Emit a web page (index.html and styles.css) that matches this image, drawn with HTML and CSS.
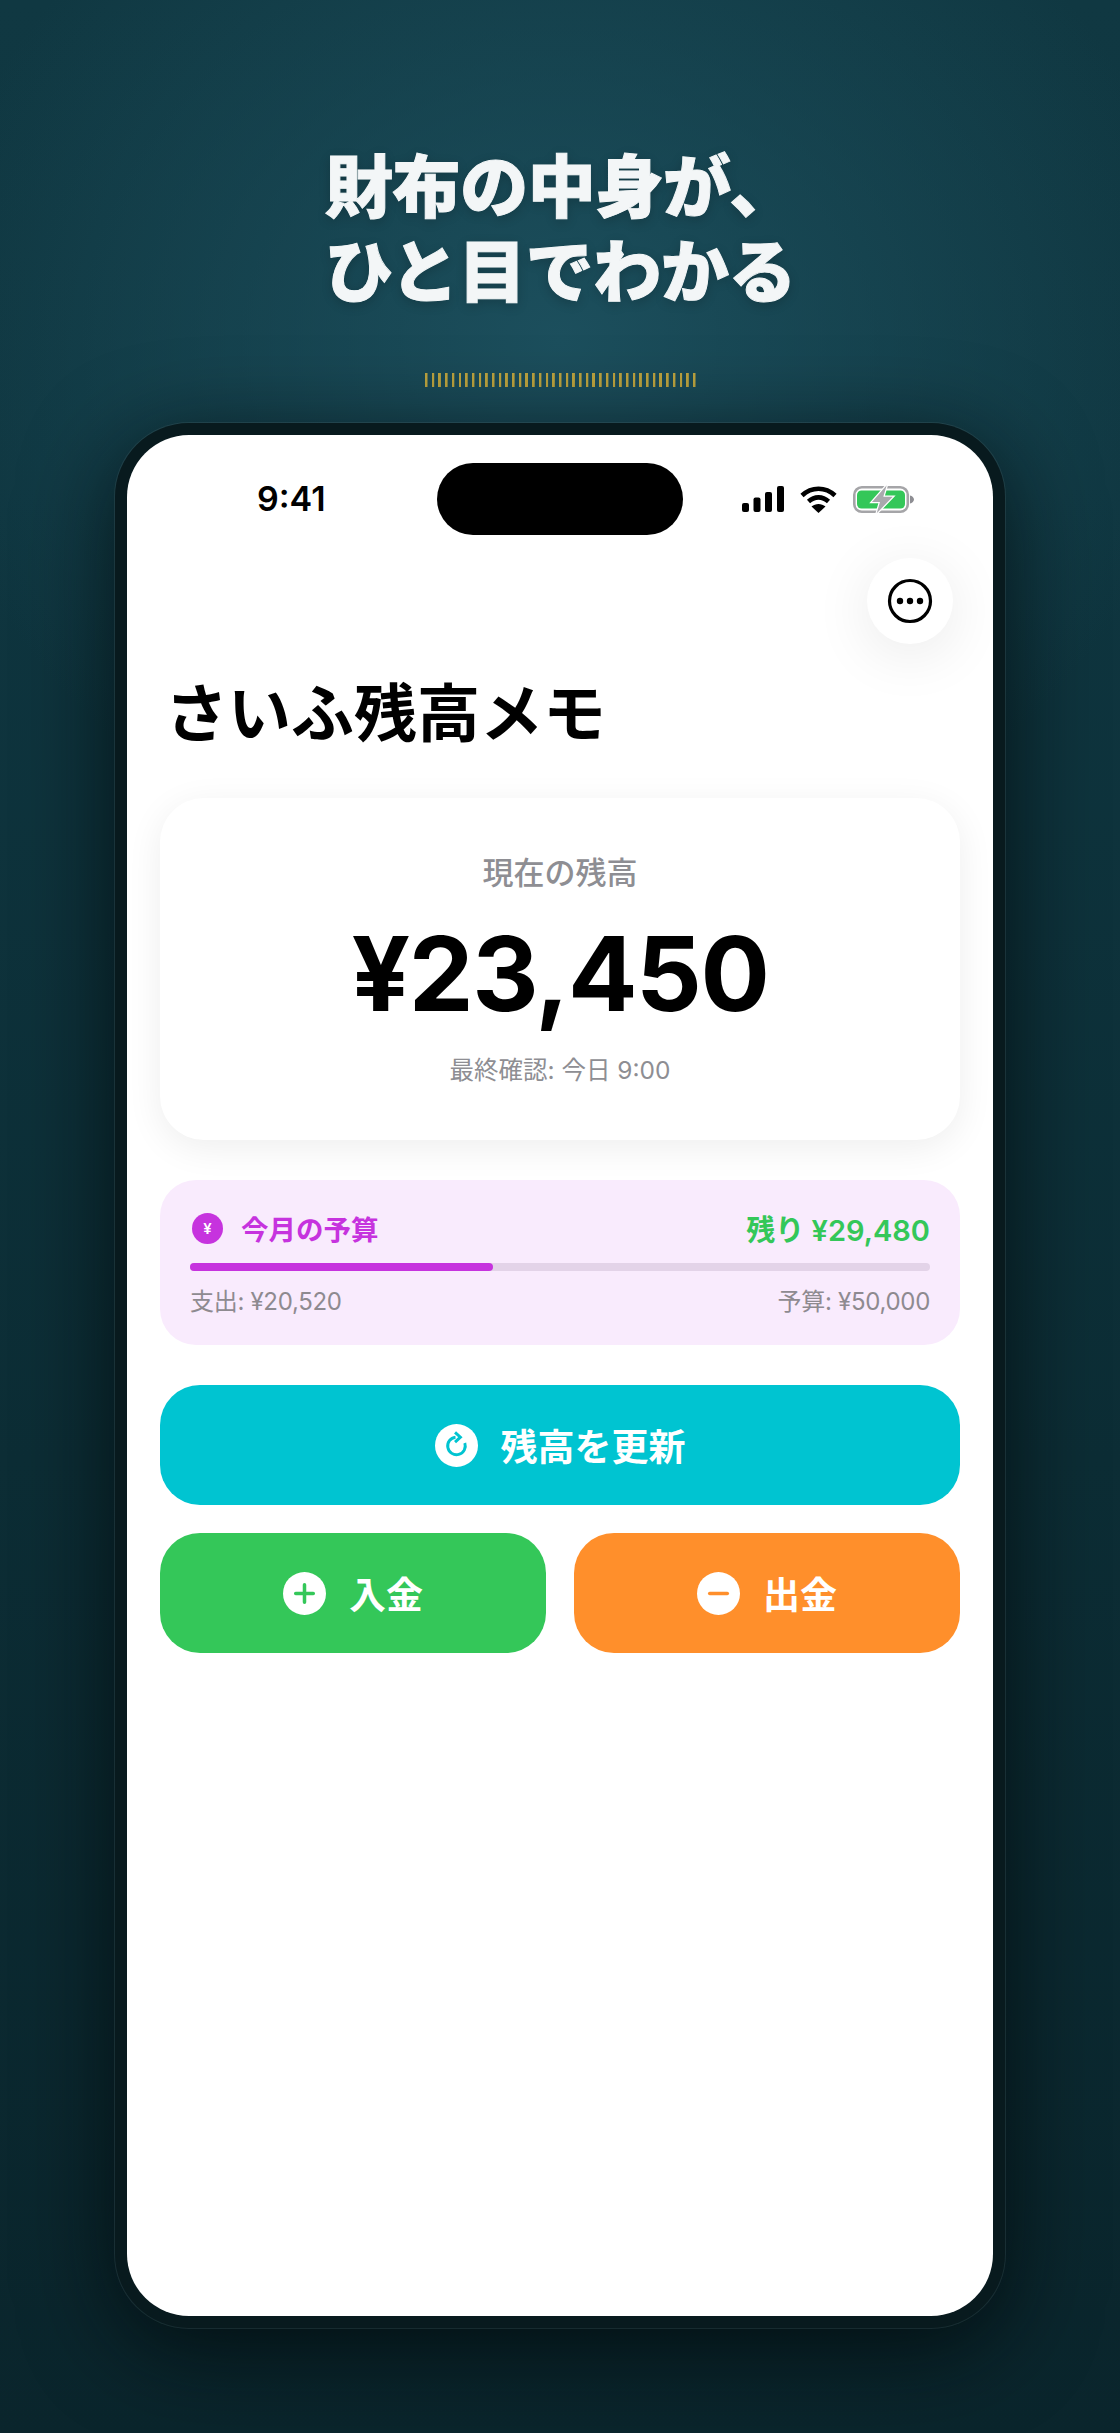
FILE: index.html
```html
<!DOCTYPE html>
<html lang="ja">
<head>
<meta charset="UTF-8">
<title>さいふ残高メモ</title>
<link rel="stylesheet" href="styles.css">
</head>
<body>
  <div class="stage">
    <h1 class="headline">財布の中身が、<br>ひと目でわかる</h1>
    <div class="ticks"></div>

    <div class="phone">
      <div class="screen">
        <!-- Status bar -->
        <div class="status">
          <span class="time">9:41</span>
          <div class="island"></div>
          <div class="status-icons">
            <svg width="42" height="26" viewBox="0 0 42 26"><rect x="0" y="17" width="7" height="9" rx="2"/><rect x="11.500" y="11.500" width="7" height="14.500" rx="2"/><rect x="23" y="6" width="7" height="20" rx="2"/><rect x="35" y="0" width="7" height="26" rx="2"/></svg>
            <svg width="37" height="27" viewBox="0 0 37 27" fill="none" stroke="#000" stroke-width="4.600"><path d="M2 9.500C11.500 .5 25.500 .5 35 9.500"/><path d="M8.500 15.500C14.500 10 22.500 10 28.500 15.500"/><path d="M18.500 27 11.500 20.500C15.500 17 21.500 17 25.500 20.500Z" fill="#000" stroke="none"/></svg>
            <svg width="61" height="29" viewBox="0 0 61 29"><rect x="1.300" y="2.300" width="53.500" height="24.500" rx="7.500" fill="none" stroke="#a5a5a8" stroke-width="2.600"/><rect x="4" y="5.500" width="48" height="18" rx="4.500" fill="#34c759"/><path d="M57 10.500c2.300.5 4 2.200 4 4s-1.700 3.500-4 4z" fill="#8e8e93"/><path d="M33.700.3 19 17h8l-3.300 11.300L39.700 11.700h-9.400z" fill="#a9a9ad" stroke="#fff" stroke-width="2.500" paint-order="stroke"/></svg>
          </div>
        </div>

        <div class="toolbar">
          <button class="menu-btn">
            <svg width="46" height="46" viewBox="0 0 46 46"><circle cx="23" cy="23" r="20.500" fill="none" stroke="#000" stroke-width="3.200"/><circle cx="13" cy="23" r="3.200"/><circle cx="23" cy="23" r="3.200"/><circle cx="33" cy="23" r="3.200"/></svg>
          </button>
        </div>

        <h2 class="app-title">さいふ残高メモ</h2>

        <!-- Balance -->
        <section class="balance-card">
          <div class="balance-label">現在の残高</div>
          <div class="balance-amount">¥23,450</div>
          <div class="balance-note">最終確認: 今日 9:00</div>
        </section>

        <!-- Budget -->
        <section class="budget">
          <div class="budget-head">
            <div class="budget-name"><span class="yen-badge">¥</span>今月の予算</div>
            <div class="budget-left">残り ¥29,480</div>
          </div>
          <div class="bar"><div class="bar-fill" style="width:41%"></div></div>
          <div class="budget-foot">
            <span>支出: ¥20,520</span>
            <span>予算: ¥50,000</span>
          </div>
        </section>

        <!-- Actions -->
        <button class="action action-update">
          <svg class="action-icon" viewBox="0 0 44 44"><circle cx="22" cy="22" r="22" fill="#fff"/><path d="M21 13.500A9 9 0 1 0 30.500 19.500" fill="none" stroke="#00c4d1" stroke-width="3"/><path d="M20.500 8.500 26 13.500 20.500 18.500" fill="none" stroke="#00c4d1" stroke-width="3"/></svg>
          残高を更新
        </button>
        <div class="action-row">
          <button class="action action-in">
            <svg class="action-icon" viewBox="0 0 44 44"><circle cx="22" cy="22" r="22" fill="#fff"/><path d="M22 13v18M13 22h18" stroke="#34c759" stroke-width="3.600" stroke-linecap="round"/></svg>
            入金
          </button>
          <button class="action action-out">
            <svg class="action-icon" viewBox="0 0 44 44"><circle cx="22" cy="22" r="22" fill="#fff"/><path d="M13 22h18" stroke="#ff8f2b" stroke-width="3.600" stroke-linecap="round"/></svg>
            出金
          </button>
        </div>
      </div>
    </div>
  </div>
</body>
</html>
```

FILE: styles.css
```css
* {
  box-sizing: border-box;
}

body {
  margin: 0;
  font-family: Inter, "Noto Sans CJK JP", sans-serif;
  color: #000;
}

button {
  border: none;
  font-family: inherit;
  cursor: pointer;
}

.stage {
  width: 1120px;
  height: 2433px;
  overflow: hidden;
  padding-top: 140px;
  background:
    radial-gradient(ellipse 640px 560px at 50% 340px, #1c4f5d 0%, rgba(28, 79, 93, 0) 100%),
    linear-gradient(180deg, #103842 0%, #0f3640 20%, #0c2d35 60%, #0a252c 100%);
}

.headline {
  margin: 0 0 0 325px;
  font-family: "Noto Sans CJK JP", sans-serif;
  font-size: 68px;
  font-weight: 900;
  line-height: 85px;
  letter-spacing: -0.400px;
  color: #f3f6f7;
  -webkit-text-stroke: 1px #f3f6f7;
  text-shadow: 0 3px 12px rgba(0, 0, 0, 0.2);
}

.ticks {
  width: 271px;
  height: 14px;
  margin: 63px auto 36px;
  background: repeating-linear-gradient(90deg, #bda43f 0 2px, transparent 3px 6.700px);
}

.phone {
  width: 890px;
  height: 1905px;
  margin: 0 auto;
  padding: 12px;
  border-radius: 74px;
  background: #081a1e;
  box-shadow: 0 0 0 1px rgba(90, 120, 125, 0.22), 0 20px 90px rgba(0, 8, 10, 0.75);
}

.screen {
  height: 100%;
  padding: 0 33px;
  border-radius: 62px;
  background: #fff;
  overflow: hidden;
}

.status {
  display: flex;
  align-items: center;
  height: 72px;
  margin-top: 28px;
  padding-left: 97px;
}

.time {
  width: 180px;
  font-size: 34px;
  font-weight: 600;
  line-height: 1;
}

.island {
  width: 246px;
  height: 72px;
  border-radius: 36px;
  background: #000;
}

.status-icons {
  display: flex;
  align-items: center;
  gap: 16px;
  margin-left: 59px;
}

.toolbar {
  display: flex;
  justify-content: flex-end;
  padding-right: 7px;
  margin-top: 23px;
}

.menu-btn {
  display: flex;
  align-items: center;
  justify-content: center;
  width: 86px;
  height: 86px;
  padding: 0;
  border-radius: 50%;
  background: #fff;
  box-shadow: 0 10px 60px rgba(0, 0, 0, 0.09);
}

.app-title {
  margin: 21px 0 0 5px;
  font-family: "Noto Sans CJK JP", sans-serif;
  font-size: 63px;
  font-weight: 700;
  line-height: 88px;
}

.balance-card {
  height: 342px;
  margin-top: 45px;
  padding-top: 52px;
  border-radius: 44px;
  background: #fff;
  text-align: center;
  box-shadow: 0 8px 36px rgba(0, 0, 0, 0.07);
}

.balance-label {
  font-size: 31px;
  font-weight: 500;
  line-height: 46px;
  color: #8e8e93;
}

.balance-amount {
  margin-top: 18px;
  font-size: 103px;
  font-weight: 700;
  line-height: 120px;
  letter-spacing: -1.500px;
}

.balance-note {
  margin-top: 17px;
  font-size: 24.500px;
  line-height: 38px;
  color: #8e8e93;
}

.budget {
  height: 165px;
  margin-top: 40px;
  padding: 29px 30px 0;
  border-radius: 36px;
  background: #f9ebfd;
}

.budget-head,
.budget-foot {
  display: flex;
  justify-content: space-between;
  align-items: center;
}

.budget-head {
  height: 38px;
}

.budget-name {
  display: flex;
  align-items: center;
  gap: 18px;
  font-size: 27.500px;
  font-weight: 600;
  color: #c633de;
}

.yen-badge {
  display: flex;
  align-items: center;
  justify-content: center;
  width: 31px;
  height: 31px;
  margin-left: 2px;
  border-radius: 50%;
  background: #c633de;
  color: #fff;
  font-size: 15px;
  font-weight: 600;
}

.budget-left {
  font-size: 29px;
  font-weight: 600;
  color: #34c759;
}

.bar {
  height: 8px;
  margin-top: 16px;
  border-radius: 4px;
  background: #e3d3e8;
}

.bar-fill {
  height: 100%;
  border-radius: 4px;
  background: #c633de;
}

.budget-foot {
  margin-top: 13px;
  font-size: 24px;
  line-height: 36px;
  letter-spacing: -0.300px;
  color: #8e8a90;
}

.action {
  display: flex;
  align-items: center;
  justify-content: center;
  gap: 23px;
  width: 100%;
  height: 120px;
  padding: 0;
  border-radius: 40px;
  color: #fff;
  font-size: 37px;
  font-weight: 600;
}

.action-icon {
  width: 43px;
  height: 43px;
}

.action-update {
  margin-top: 40px;
  background: #00c4d1;
}

.action-row {
  display: flex;
  gap: 28px;
  margin-top: 28px;
}

.action-in {
  background: #34c759;
}

.action-out {
  background: #ff8f2b;
}
```
